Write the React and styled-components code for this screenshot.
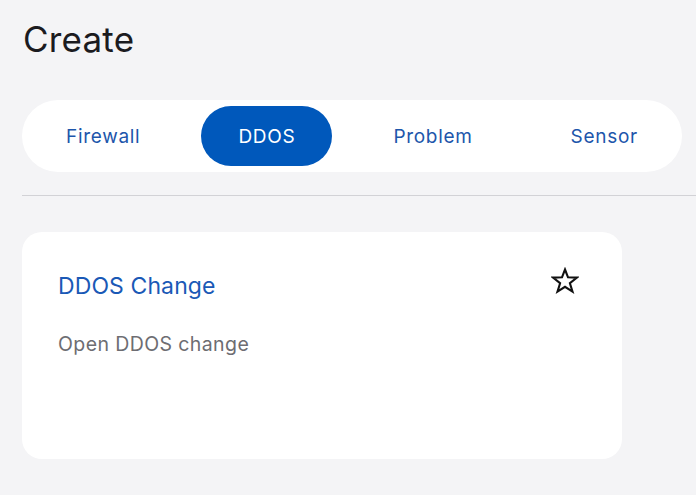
import React, { useState } from "react";
import styled, { createGlobalStyle } from "styled-components";

const GlobalStyle = createGlobalStyle`
    html, body {
        margin: 0;
        padding: 0;
        background: #f4f4f6;
        font-family: Inter, "Noto Sans", sans-serif;
    }
`;

const tabs = ["Firewall", "DDOS", "Problem", "Sensor"];

export default function App() {
    const [active, setActive] = useState("DDOS");

    return (
        <>
            <GlobalStyle />
            <Page>
                <Title>Create</Title>
                <TabBar>
                    {tabs.map((t) => (
                        <Tab key={t} active={t === active} onClick={() => setActive(t)}>
                            {t}
                        </Tab>
                    ))}
                </TabBar>
                <Divider />
                <Card>
                    <CardHead>
                        <CardTitle>DDOS Change</CardTitle>
                        <StarButton aria-label="favourite">
                            <svg width="28" height="28" viewBox="0 0 28 28">
                                <polygon
                                    points="14,2.5 17,10.3 26,10.6 18.9,16.2 21.5,24.6 14,19.8 6.5,24.6 9.1,16.2 2,10.6 11,10.3"
                                    fill="none"
                                    stroke="#111"
                                    strokeWidth="2.1"
                                    strokeLinejoin="miter"
                                />
                            </svg>
                        </StarButton>
                    </CardHead>
                    <CardText>Open DDOS change</CardText>
                </Card>
            </Page>
        </>
    );
}

const Page = styled.div`
    padding: 18px 0 0 22px;
    width: 674px;
    height: 477px;
    overflow: hidden;
`;

const Title = styled.h1`
    margin: 0 0 0 1px;
    font-size: 35px;
    font-weight: 400;
    color: #1b1b1f;
    line-height: 42px;
    letter-spacing: 0.2px;
`;

const TabBar = styled.div`
    margin-top: 40px;
    width: 660px;
    box-sizing: border-box;
    height: 72px;
    background: #fff;
    border-radius: 36px;
    padding: 6px 7px;
    display: flex;
    gap: 24px;
`;

const Tab = styled.button`
    border: none;
    height: 60px;
    padding: 0 37px;
    border-radius: 30px;
    font-family: Inter, "Noto Sans", sans-serif;
    font-size: 19px;
    letter-spacing: 0.7px;
    font-weight: 400;
    cursor: pointer;
    background: ${(p) => (p.active ? "#0058bb" : "transparent")};
    color: ${(p) => (p.active ? "#fff" : "#1d56ab")};
`;

const Divider = styled.hr`
    margin: 23px 0 0 0;
    border: none;
    border-top: 1px solid #d2d2d6;
`;

const Card = styled.div`
    margin-top: 36px;
    width: 600px;
    height: 227px;
    box-sizing: border-box;
    background: #fff;
    border-radius: 20px;
    padding: 36px 43px 0 36px;
`;

const CardHead = styled.div`
    display: flex;
    justify-content: space-between;
    align-items: flex-start;
`;

const CardTitle = styled.h2`
    margin: 0;
    font-size: 23px;
    letter-spacing: 0.1px;
    font-weight: 400;
    line-height: 36px;
    color: #1a59b6;
`;

const StarButton = styled.button`
    border: none;
    background: none;
    padding: 0;
    margin-top: -1px;
    cursor: pointer;
    display: flex;
`;

const CardText = styled.p`
    margin: 28px 0 0 0;
    font-size: 19.5px;
    letter-spacing: 0.4px;
    line-height: 24px;
    color: #6d6d72;
`;
